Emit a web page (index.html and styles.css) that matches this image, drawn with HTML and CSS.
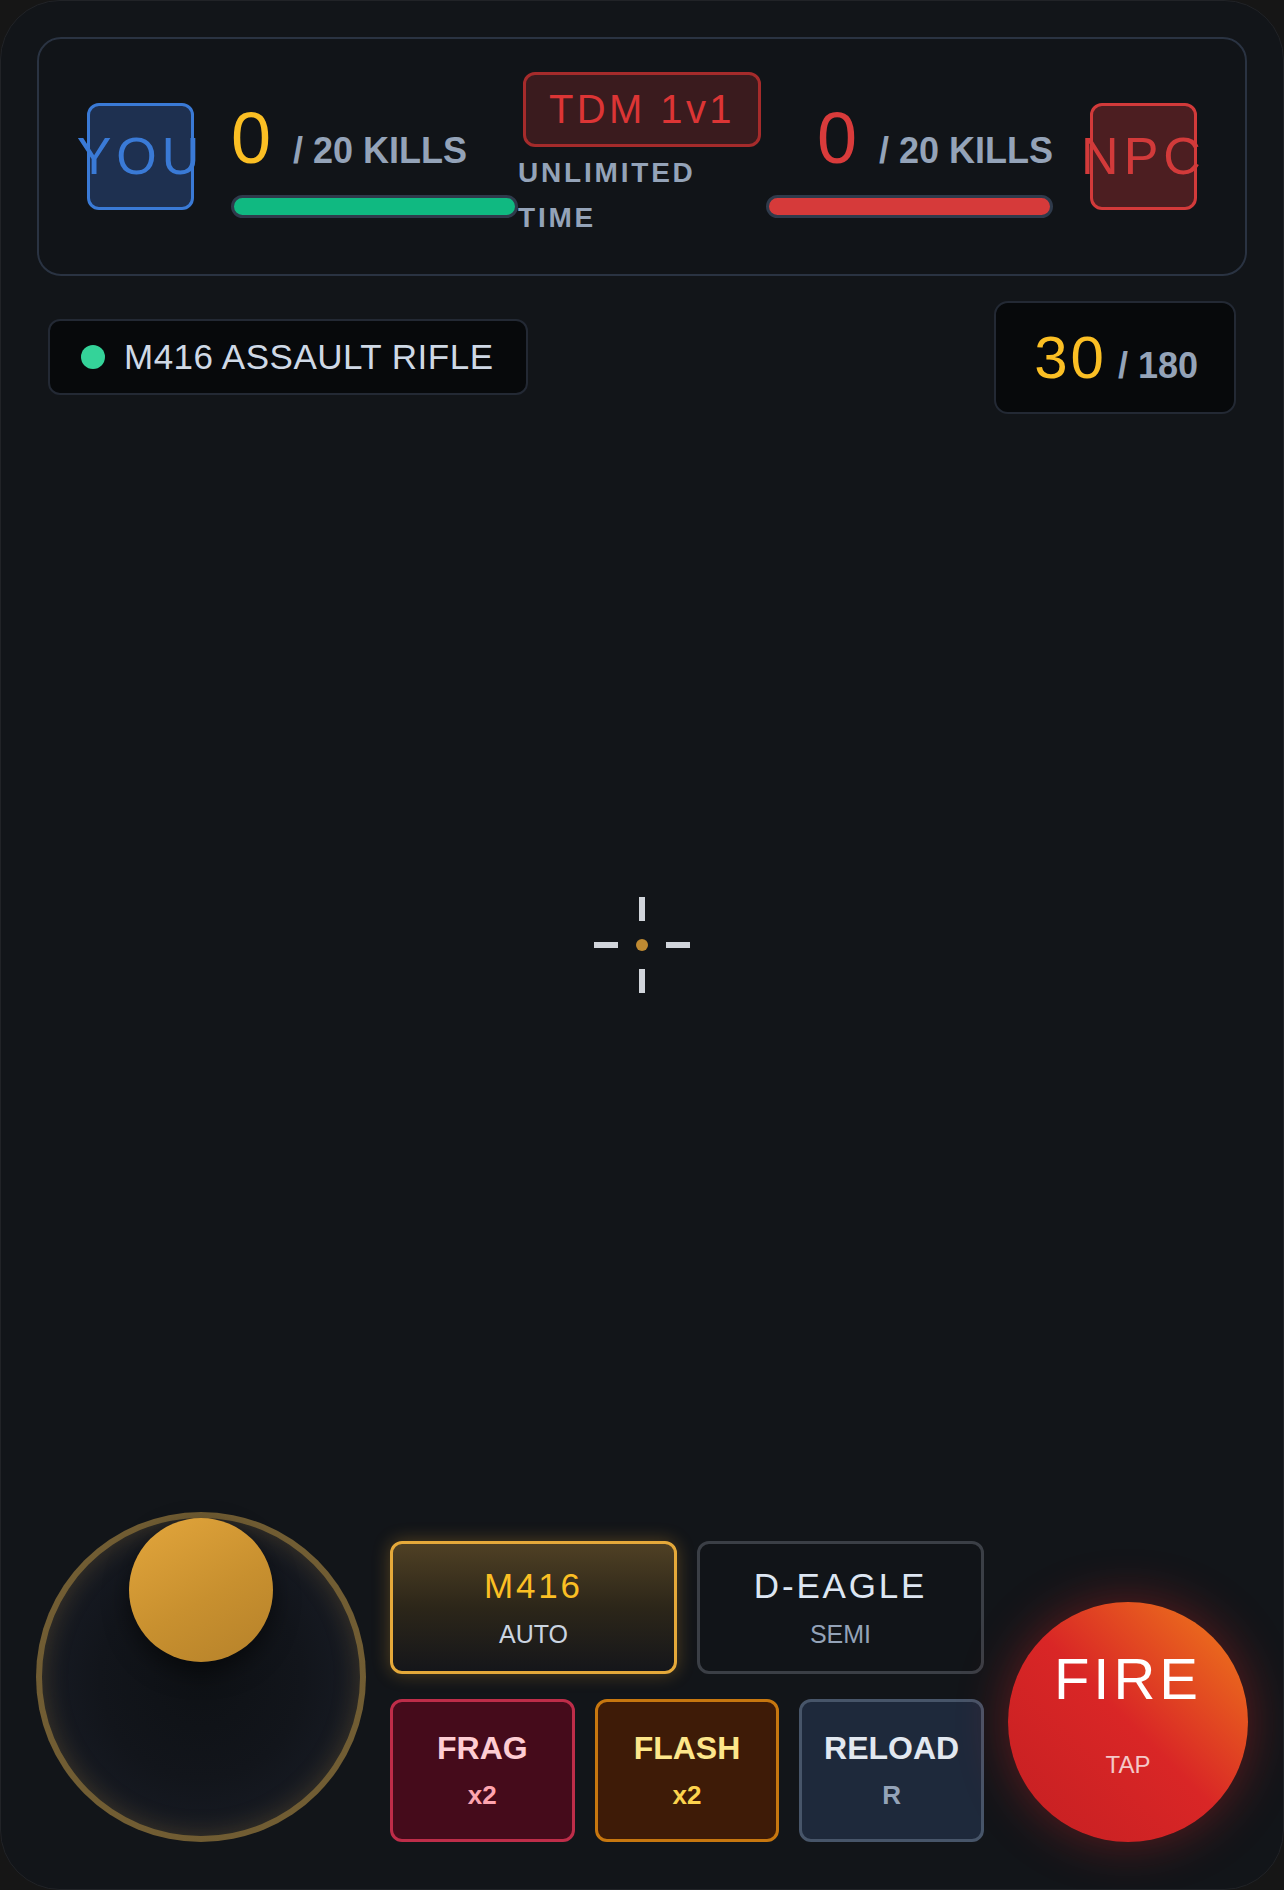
FILE: index.html
```html
<!DOCTYPE html>
<html lang="en">
<head>
    <meta charset="UTF-8">
    <meta name="viewport" content="width=device-width, initial-scale=1.0">
    <title>TDM 1v1</title>
    <link rel="stylesheet" href="styles.css">
</head>
<body>

    <div class="device">
        <!-- 比分面板 -->
        <header class="scoreboard">
            <div class="side">
                <div class="tag tag-you">YOU</div>
                <div class="score">
                    <div class="score-line">
                        <span class="kills kills-you">0</span>
                        <span class="goal">/ 20 KILLS</span>
                    </div>
                    <div class="bar bar-you"></div>
                </div>
            </div>

            <div class="mode">
                <div class="mode-name">TDM 1v1</div>
                <div class="mode-time">UNLIMITED TIME</div>
            </div>

            <div class="side">
                <div class="score score-right">
                    <div class="score-line">
                        <span class="kills kills-npc">0</span>
                        <span class="goal">/ 20 KILLS</span>
                    </div>
                    <div class="bar bar-npc"></div>
                </div>
                <div class="tag tag-npc">NPC</div>
            </div>
        </header>

        <!-- 武器與彈藥 -->
        <div class="hud">
            <div class="weapon-label">
                <span class="dot"></span>
                <span>M416 ASSAULT RIFLE</span>
            </div>
            <div class="ammo">
                <span class="mag">30</span>
                <span class="reserve">/ 180</span>
            </div>
        </div>

        <div class="field"></div>

        <div class="crosshair">
            <span class="tick tick-top"></span>
            <span class="tick tick-bottom"></span>
            <span class="tick tick-left"></span>
            <span class="tick tick-right"></span>
            <span class="center-dot"></span>
        </div>

        <!-- 操作區 -->
        <div class="controls">
            <div class="stick">
                <div class="knob"></div>
            </div>

            <div class="actions">
                <div class="weapons">
                    <button class="btn btn-primary active">
                        <span class="btn-title">M416</span>
                        <span class="btn-sub">AUTO</span>
                    </button>
                    <button class="btn btn-primary">
                        <span class="btn-title">D-EAGLE</span>
                        <span class="btn-sub">SEMI</span>
                    </button>
                </div>
                <div class="utilities">
                    <button class="btn btn-util frag">
                        <span class="util-title">FRAG</span>
                        <span class="util-sub">x2</span>
                    </button>
                    <button class="btn btn-util flash">
                        <span class="util-title">FLASH</span>
                        <span class="util-sub">x2</span>
                    </button>
                    <button class="btn btn-util reload">
                        <span class="util-title">RELOAD</span>
                        <span class="util-sub">R</span>
                    </button>
                </div>
            </div>

            <button class="fire">
                <span class="fire-title">FIRE</span>
                <span class="fire-sub">TAP</span>
            </button>
        </div>
    </div>

</body>
</html>
```

FILE: styles.css
```css
body {
    margin: 0;
    background-color: #161616;
    font-family: "Liberation Sans", Arial, sans-serif;
}

.device {
    position: relative;
    box-sizing: border-box;
    width: 1284px;
    height: 1890px;
    padding: 36px;
    border: 1px solid #212327;
    border-radius: 60px;
    background-color: #121519;
    display: flex;
    flex-direction: column;
    overflow: hidden;
}

/* --- 比分面板 --- */

.scoreboard {
    display: flex;
    justify-content: space-between;
    align-items: center;
    padding: 33px 48px;
    border: 2px solid #2a3342;
    border-radius: 24px;
    background-color: #111418;
}

.side {
    display: flex;
    align-items: center;
    gap: 37px;
}

.tag {
    box-sizing: border-box;
    width: 107px;
    height: 107px;
    border: 3px solid;
    border-radius: 12px;
    display: flex;
    justify-content: center;
    align-items: center;
    font-size: 52px;
    letter-spacing: 5px;
    white-space: nowrap;
}

.tag-you {
    background-color: #1e3050;
    border-color: #3a7ad6;
    color: #3a7ad6;
}

.tag-npc {
    background-color: #4c1e21;
    border-color: #d23a3a;
    color: #d23a3a;
}

.score {
    width: 287px;
    display: flex;
    flex-direction: column;
}

.score-line {
    display: flex;
    align-items: baseline;
    gap: 22px;
    line-height: 1.2;
}

.score-right .score-line {
    justify-content: flex-end;
}

.kills {
    font-size: 72px;
}

.kills-you {
    color: #fbbf24;
}

.kills-npc {
    color: #d93b3b;
}

.goal {
    font-size: 36px;
    font-weight: bold;
    color: #94a3b8;
}

.bar {
    box-sizing: border-box;
    height: 23px;
    margin-top: 14px;
    border: 3px solid #2f3a4b;
    border-radius: 12px;
}

.bar-you {
    background-color: #10b981;
}

.bar-npc {
    background-color: #d63a3a;
}

.mode {
    flex: 1;
    display: flex;
    flex-direction: column;
    align-items: center;
}

.mode-name {
    padding: 12px 23px;
    border: 3px solid #a52b2b;
    border-radius: 12px;
    background-color: #3a1b1e;
    color: #dc3535;
    font-size: 40px;
    letter-spacing: 0.085em;
    white-space: nowrap;
}

.mode-time {
    align-self: stretch;
    margin-top: 4px;
    color: #94a3b8;
    font-size: 28px;
    font-weight: bold;
    line-height: 1.6;
    letter-spacing: 0.1em;
}

/* --- 武器與彈藥 --- */

.hud {
    display: flex;
    justify-content: space-between;
    align-items: center;
    margin-top: 25px;
    padding: 0 11px;
}

.weapon-label {
    box-sizing: border-box;
    height: 76px;
    padding: 0 32px 0 31px;
    display: flex;
    align-items: center;
    gap: 19px;
    border: 2px solid #232934;
    border-radius: 12px;
    background-color: #07090b;
    color: #cfd9e6;
    font-size: 35px;
    letter-spacing: 0.5px;
}

.dot {
    width: 24px;
    height: 24px;
    border-radius: 50%;
    background-color: #34d399;
}

.ammo {
    padding: 20px 36px 20px 38px;
    display: flex;
    align-items: baseline;
    border: 2px solid #232934;
    border-radius: 14px;
    background-color: #07090b;
}

.mag {
    color: #fbbf24;
    font-size: 60px;
    letter-spacing: 3px;
}

.reserve {
    margin-left: 11px;
    color: #94a3b8;
    font-size: 36px;
    font-weight: bold;
}

.field {
    flex: 1;
}

/* --- 準星 --- */

.crosshair {
    position: absolute;
    left: 50%;
    top: 50%;
    width: 96px;
    height: 96px;
    transform: translate(-50%, -50%);
}

.tick {
    position: absolute;
    background-color: #d1d5db;
}

.tick-top,
.tick-bottom {
    left: 45px;
    width: 6px;
    height: 24px;
}

.tick-top {
    top: 0;
}

.tick-bottom {
    bottom: 0;
}

.tick-left,
.tick-right {
    top: 45px;
    width: 24px;
    height: 6px;
}

.tick-left {
    left: 0;
}

.tick-right {
    right: 0;
}

.center-dot {
    position: absolute;
    left: 42px;
    top: 42px;
    width: 12px;
    height: 12px;
    border-radius: 50%;
    background-color: #bf8a32;
}

/* --- 操作區 --- */

.controls {
    display: flex;
    align-items: flex-end;
    gap: 24px;
    margin: 0 -1px 11px;
}

.stick {
    position: relative;
    box-sizing: border-box;
    width: 330px;
    height: 330px;
    flex-shrink: 0;
    border: 6px solid rgba(212, 165, 70, 0.48);
    border-radius: 50%;
    background: radial-gradient(circle, #0e1115 0%, #12151b 45%, #181c25 78%, #221f1a 100%);
    box-shadow: inset 0 0 26px rgba(212, 160, 60, 0.22);
}

.knob {
    position: absolute;
    top: 0;
    left: 50%;
    width: 144px;
    height: 144px;
    transform: translateX(-50%);
    border-radius: 50%;
    background: linear-gradient(150deg, #e3a63c 0%, #c8902f 55%, #b5812a 100%);
    box-shadow: 0 10px 24px rgba(0, 0, 0, 0.5);
}

.actions {
    width: 594px;
    flex-shrink: 0;
    display: flex;
    flex-direction: column;
    gap: 25px;
}

.weapons {
    display: grid;
    grid-template-columns: 1fr 1fr;
    gap: 20px;
    height: 133px;
}

.utilities {
    display: grid;
    grid-template-columns: 1fr 1fr 1fr;
    gap: 20px;
    height: 143px;
}

.btn {
    display: flex;
    flex-direction: column;
    justify-content: center;
    align-items: center;
    gap: 14px;
    padding: 0;
    border: 3px solid;
    border-radius: 12px;
    font-family: inherit;
    line-height: 1.15;
    cursor: pointer;
}

.btn-primary {
    border-color: #3b3f46;
    background-color: #111418;
}

.btn-primary .btn-title {
    color: #dde6f2;
}

.btn-primary.active {
    border-color: #e5a93a;
    background: linear-gradient(180deg, #4f4024 0%, #2c2619 50%, #15161a 100%);
    box-shadow: 0 0 18px rgba(240, 170, 50, 0.3);
}

.btn-primary.active .btn-title {
    color: #fbbf24;
}

.btn-primary.active .btn-sub {
    color: #cbd5e1;
}

.btn-title {
    font-size: 35px;
    letter-spacing: 0.08em;
}

.btn-sub {
    font-size: 25px;
    color: #94a3b8;
}

.util-title {
    font-size: 32px;
    font-weight: bold;
}

.util-sub {
    font-size: 26px;
    font-weight: bold;
}

.frag {
    border-color: #be2d49;
    background-color: #450b1b;
}

.frag .util-title {
    color: #fecdd3;
}

.frag .util-sub {
    color: #fda4af;
}

.flash {
    border-color: #c7770f;
    background-color: #3e1b07;
}

.flash .util-title {
    color: #fde68a;
}

.flash .util-sub {
    color: #fcd34d;
}

.reload {
    border-color: #475569;
    background-color: #1e293b;
}

.reload .util-title {
    color: #e2e8f0;
}

.reload .util-sub {
    color: #94a3b8;
}

.fire {
    width: 240px;
    height: 240px;
    flex-shrink: 0;
    display: flex;
    flex-direction: column;
    justify-content: center;
    align-items: center;
    gap: 38px;
    padding: 0 0 20px;
    border: none;
    border-radius: 50%;
    background: linear-gradient(45deg, #c41f22 0%, #d92626 50%, #f0801a 100%);
    box-shadow: 0 0 50px rgba(220, 38, 38, 0.4);
    color: #ffffff;
    font-family: inherit;
    line-height: 1.15;
    cursor: pointer;
}

.fire-title {
    font-size: 58px;
    letter-spacing: 4px;
}

.fire-sub {
    font-size: 24px;
    color: rgba(255, 255, 255, 0.75);
}
```
